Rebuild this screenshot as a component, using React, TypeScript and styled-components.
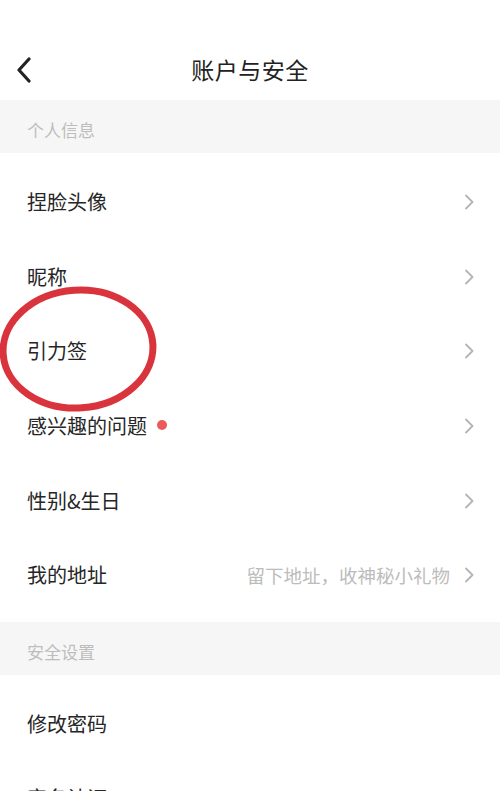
import React from "react";
import styled, { createGlobalStyle } from "styled-components";

const GlobalStyle = createGlobalStyle`
  html, body {
    margin: 0;
    padding: 0;
    background: #fff;
  }
  body {
    font-family: "Noto Sans CJK SC", "Noto Sans", sans-serif;
    overflow: hidden;
  }
`;

const Page = styled.div`
  position: relative;
  width: 500px;
  height: 791px;
  overflow: hidden;
  background: #fff;
`;

const Header = styled.div`
  height: 100px;
  display: flex;
  align-items: center;
  justify-content: center;
  position: relative;
  padding-top: 40px;
  box-sizing: border-box;
`;

const BackButton = styled.div`
  position: absolute;
  left: 16px;
  top: 56px;
  width: 20px;
  height: 28px;
  display: flex;
  align-items: center;
`;

const Title = styled.h1`
  margin: 0;
  font-size: 23px;
  font-weight: 400;
  color: #222;
  letter-spacing: 0.5px;
  line-height: 1;
  transform: translateY(-1px);
`;

const SectionHeader = styled.div`
  height: 53px;
  box-sizing: border-box;
  background: #f6f6f6;
  display: flex;
  align-items: center;
  padding: 6px 0 0 27px;
  font-size: 17px;
  color: #bdbdbd;
`;

const List = styled.div<{ $top: number; $bottom: number }>`
  padding-top: ${(p) => p.$top}px;
  padding-bottom: ${(p) => p.$bottom}px;
`;

const Row = styled.div`
  height: 74.6px;
  display: flex;
  align-items: center;
  padding: 0 26px 0 27px;
`;

const Label = styled.span`
  font-size: 20px;
  color: #262626;
  line-height: 1;
`;

const Dot = styled.span`
  width: 10px;
  height: 10px;
  border-radius: 50%;
  background: #ec5b5b;
  margin-left: 10px;
  margin-top: -2px;
`;

const Spacer = styled.div`
  flex: 1;
`;

const Hint = styled.span`
  font-size: 18.5px;
  color: #bcbcbc;
  margin-right: 14px;
`;

const Annotation = styled.svg`
  position: absolute;
  left: 0;
  top: 282px;
  pointer-events: none;
`;

const Chevron = () => (
  <svg width="10" height="16" viewBox="0 0 10 16">
    <path d="M2 1.5 L8.5 8 L2 14.5" fill="none" stroke="#b4b4b4" strokeWidth="1.8" strokeLinecap="round" strokeLinejoin="round" />
  </svg>
);

type Item = { label: string; dot?: boolean; hint?: string; arrow?: boolean };

const personal: Item[] = [
  { label: "捏脸头像", arrow: true },
  { label: "昵称", arrow: true },
  { label: "引力签", arrow: true },
  { label: "感兴趣的问题", dot: true, arrow: true },
  { label: "性别&生日", arrow: true },
  { label: "我的地址", hint: "留下地址，收神秘小礼物", arrow: true },
];

const security: Item[] = [
  { label: "修改密码" },
  { label: "实名认证" },
];

function ItemRow({ item }: { item: Item }) {
  return (
    <Row>
      <Label>{item.label}</Label>
      {item.dot && <Dot />}
      <Spacer />
      {item.hint && <Hint>{item.hint}</Hint>}
      {item.arrow && <Chevron />}
    </Row>
  );
}

export default function App() {
  return (
    <>
      <GlobalStyle />
      <Page>
        <Header>
          <BackButton>
            <svg width="16" height="26" viewBox="0 0 16 26">
              <path d="M13 2 L3 13 L13 24" fill="none" stroke="#222" strokeWidth="3.2" strokeLinecap="round" strokeLinejoin="round" />
            </svg>
          </BackButton>
          <Title>账户与安全</Title>
        </Header>
        <SectionHeader>个人信息</SectionHeader>
        <List $top={12} $bottom={9}>
          {personal.map((it) => (
            <ItemRow key={it.label} item={it} />
          ))}
        </List>
        <SectionHeader>安全设置</SectionHeader>
        <List $top={12} $bottom={0}>
          {security.map((it) => (
            <ItemRow key={it.label} item={it} />
          ))}
        </List>
        <Annotation width="170" height="140" viewBox="0 0 170 140">
          <ellipse cx="78" cy="67" rx="75" ry="59" fill="none" stroke="#d9333d" strokeWidth="7" transform="rotate(-4 78 67)" />
        </Annotation>
      </Page>
    </>
  );
}
